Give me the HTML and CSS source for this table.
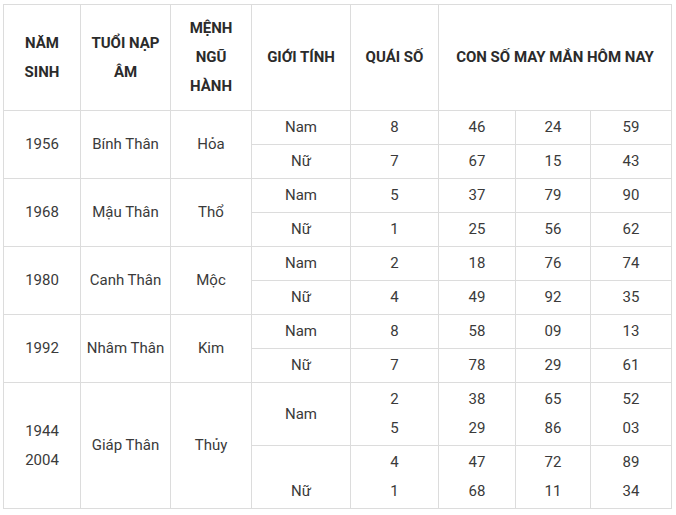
FILE: index.html
```html
<!DOCTYPE html>
<html lang="vi">
<head>
<meta charset="utf-8">
<title>Con số may mắn</title>
<link rel="stylesheet" href="styles.css">
</head>
<body>
<table class="lucky">
  <colgroup>
    <col class="c1"><col class="c2"><col class="c3"><col class="c4"><col class="c5"><col class="c6"><col class="c7"><col class="c8">
  </colgroup>
  <thead>
    <tr>
      <th>NĂM<br>SINH</th>
      <th>TUỔI NẠP<br>ÂM</th>
      <th>MỆNH<br>NGŨ<br>HÀNH</th>
      <th>GIỚI TÍNH</th>
      <th>QUÁI SỐ</th>
      <th colspan="3">CON SỐ MAY MẮN HÔM NAY</th>
    </tr>
  </thead>
  <tbody>
    <tr><td rowspan="2">1956</td><td rowspan="2">Bính Thân</td><td rowspan="2">Hỏa</td><td>Nam</td><td>8</td><td>46</td><td>24</td><td>59</td></tr>
    <tr><td>Nữ</td><td>7</td><td>67</td><td>15</td><td>43</td></tr>
    <tr><td rowspan="2">1968</td><td rowspan="2">Mậu Thân</td><td rowspan="2">Thổ</td><td>Nam</td><td>5</td><td>37</td><td>79</td><td>90</td></tr>
    <tr><td>Nữ</td><td>1</td><td>25</td><td>56</td><td>62</td></tr>
    <tr><td rowspan="2">1980</td><td rowspan="2">Canh Thân</td><td rowspan="2">Mộc</td><td>Nam</td><td>2</td><td>18</td><td>76</td><td>74</td></tr>
    <tr><td>Nữ</td><td>4</td><td>49</td><td>92</td><td>35</td></tr>
    <tr><td rowspan="2">1992</td><td rowspan="2">Nhâm Thân</td><td rowspan="2">Kim</td><td>Nam</td><td>8</td><td>58</td><td>09</td><td>13</td></tr>
    <tr><td>Nữ</td><td>7</td><td>78</td><td>29</td><td>61</td></tr>
    <tr><td rowspan="2">1944<br>2004</td><td rowspan="2">Giáp Thân</td><td rowspan="2">Thủy</td><td>Nam</td><td>2<br>5</td><td>38<br>29</td><td>65<br>86</td><td>52<br>03</td></tr>
    <tr><td><br>Nữ</td><td>4<br>1</td><td>47<br>68</td><td>72<br>11</td><td>89<br>34</td></tr>
  </tbody>
</table>
</body>
</html>
```

FILE: styles.css
```css
html, body {
  background: #ffffff;
}
body {
  margin: 4px 0 0 3px;
  font-family: Roboto, "Liberation Sans", Arial, sans-serif;
  font-size: 15px;
  color: #3a3a3a;
}
.lucky {
  border-collapse: collapse;
  table-layout: fixed;
  width: 669px;
}
.lucky .c1 { width: 77px; }
.lucky .c2 { width: 90px; }
.lucky .c3 { width: 81px; }
.lucky .c4 { width: 99px; }
.lucky .c5 { width: 88px; }
.lucky .c6 { width: 77px; }
.lucky .c7 { width: 75px; }
.lucky .c8 { width: 81px; }
.lucky th,
.lucky td {
  border: 1px solid #dcdcdc;
  text-align: center;
  vertical-align: middle;
  line-height: 29px;
  padding: 2px 2px;
}
.lucky th {
  font-weight: 700;
  color: #2b2b2b;
  padding: 9px 2px;
}
.lucky td {
  font-weight: 400;
}
```
